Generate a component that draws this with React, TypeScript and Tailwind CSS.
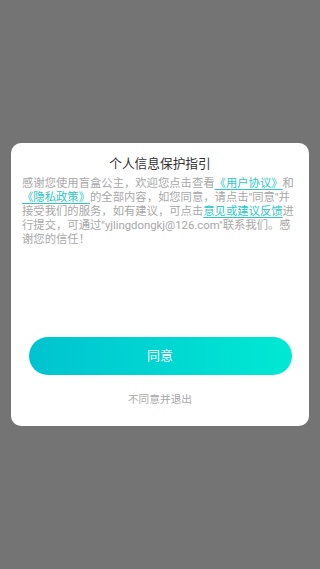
import React from "react";

const font = { fontFamily: 'Roboto, "Noto Sans CJK SC", "Noto Sans", sans-serif' };

function Link({ children }: { children: React.ReactNode }) {
  return <span className="text-[#2cc8c2] underline decoration-[#2cc8c2] underline-offset-[2px]">{children}</span>;
}

export default function App() {
  return (
    <div className="flex h-[569px] w-[320px] items-start justify-center bg-[#747474]" style={font}>
      <div className="mt-[143px] flex h-[283px] w-[298px] flex-col rounded-[10px] bg-white px-[11px]">
        <h1 className="mt-[12px] text-center text-[12.7px] leading-[18px] text-[#333333]">个人信息保护指引</h1>
        <p className="mt-[3px] h-[161px] text-[11.33px] leading-[14px] text-[#a8a8a8]">
          感谢您使用盲盒公主，欢迎您点击查看<Link>《用户协议》</Link>和<Link>《隐私政策》</Link>的全部内容，如您同意，请点击"同意"并接受我们的服务，如有建议，可点击<Link>意见或建议反馈</Link>进行提交，可通过"yjlingdongkj@126.com"联系我们。感谢您的信任！
        </p>
        <button
          type="button"
          className="mx-auto h-[38px] w-[263px] rounded-full bg-gradient-to-r from-[#00c3d0] to-[#00e9d3] text-[13px] text-white"
        >
          同意
        </button>
        <button type="button" className="mx-auto mt-[18px] text-[10.7px] leading-[14px] text-[#aaaaaa]">
          不同意并退出
        </button>
      </div>
    </div>
  );
}
